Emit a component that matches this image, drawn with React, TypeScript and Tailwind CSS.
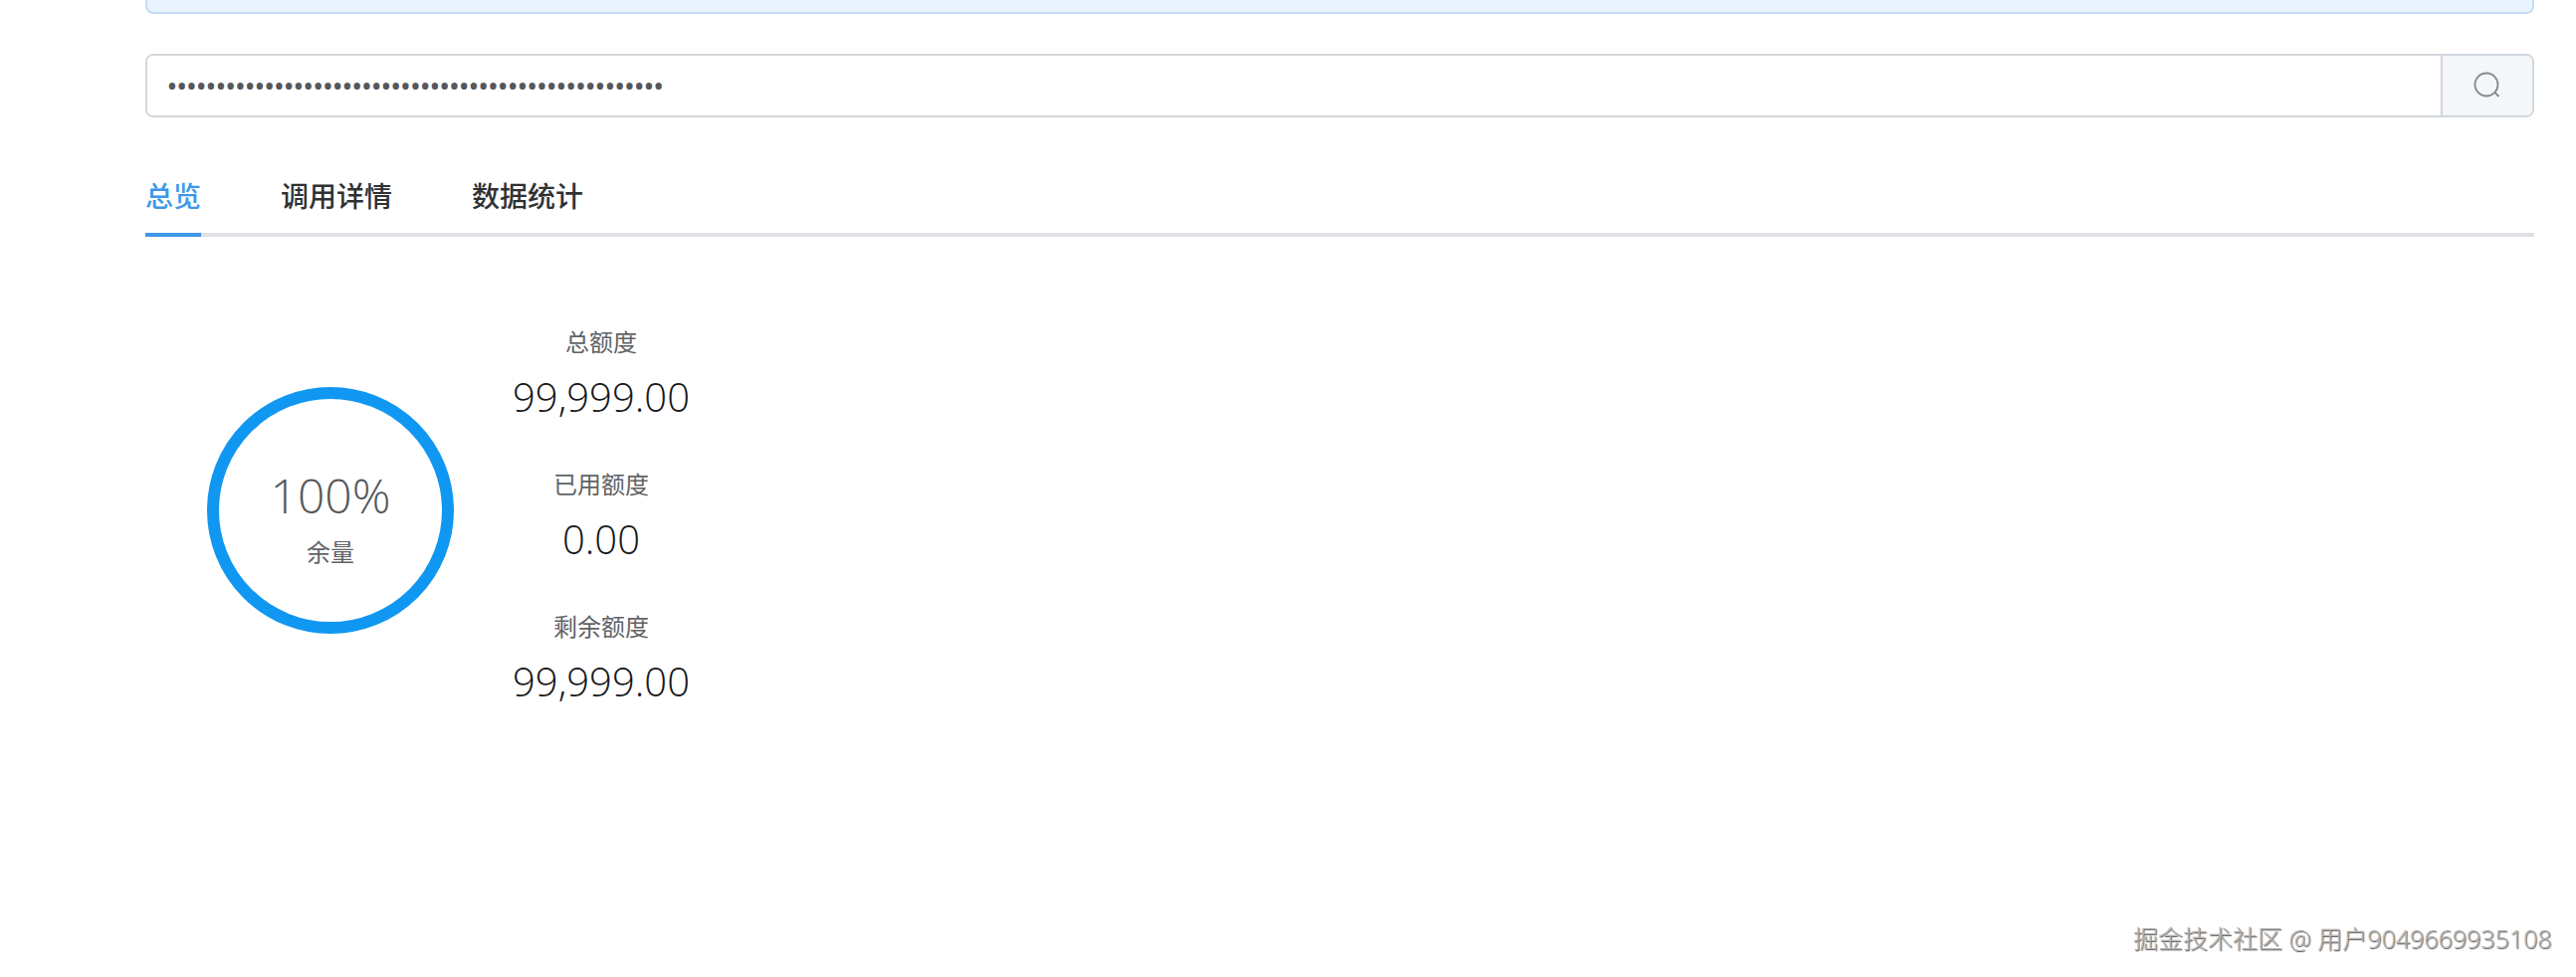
export default function App() {
  const cjk = '"Open Sans", "Noto Sans CJK SC", sans-serif';
  const stats = [
    ['总额度', '99,999.00'],
    ['已用额度', '0.00'],
    ['剩余额度', '99,999.00'],
  ];
  return (
    <div className="relative h-[982px] overflow-hidden bg-white pl-[146px] pr-[42px]" style={{ fontFamily: cjk }}>
      <div className="h-[14px] rounded-b-[8px] border-x-2 border-b-2 border-[#c5dcf8] bg-[#e8f3fd]" />
      <div className="mt-[40px] flex h-[64px] overflow-hidden rounded-[8px] border-2 border-[#d2d7dc]">
        <input
          type="password"
          readOnly
          value={'x'.repeat(51)}
          className="min-w-0 flex-1 bg-white pl-[20px] text-[26px] font-semibold text-[#55585c] outline-none"
        />
        <div className="flex w-[92px] items-center justify-center border-l-2 border-[#d2d7dc] bg-[#f3f7fa]">
          <svg width="28" height="28" viewBox="0 0 28 28" fill="none" stroke="#85898e" strokeWidth="1.8">
            <circle cx="13" cy="13" r="11.5" />
            <path d="M21.5 21l4 4" />
          </svg>
        </div>
      </div>
      <div className="mt-[56px] flex h-[64px] gap-[80px] border-b-[4px] border-[#dfe1e5] text-[28px] leading-[47px] font-medium text-[#303133]">
        <div className="-mb-[4px] border-b-[4px] border-[#3d97e8] text-[#3d97e8]">总览</div>
        <div>调用详情</div>
        <div>数据统计</div>
      </div>
      <div className="mt-[90px] flex">
        <div className="mt-[61px] ml-[62px] flex h-[248px] w-[248px] flex-col items-center rounded-full border-[12px] border-[#1097f2]">
          <div className="mt-[67px] text-[48px] leading-[60px] font-light text-[#55585c]">100%</div>
          <div className="mt-[11px] text-[24px] leading-[32px] text-[#606266]">余量</div>
        </div>
        <div className="ml-[56px] flex flex-col gap-[31px]">
          {stats.map(([label, value]) => (
            <div key={label} className="flex w-[184px] flex-col items-center">
              <div className="text-[24px] leading-[32px] text-[#606266]">{label}</div>
              <div className="mt-[3px] h-[77px] text-[40px] leading-[72px] font-light text-[#16181b]">{value}</div>
            </div>
          ))}
        </div>
      </div>
      <div className="absolute left-[2143px] top-[925px] text-[25px] leading-[36px] font-light text-[#b4b4b4] [text-shadow:1px_1px_1px_#555] whitespace-nowrap">
        掘金技术社区 @ 用户9049669935108
      </div>
    </div>
  );
}
